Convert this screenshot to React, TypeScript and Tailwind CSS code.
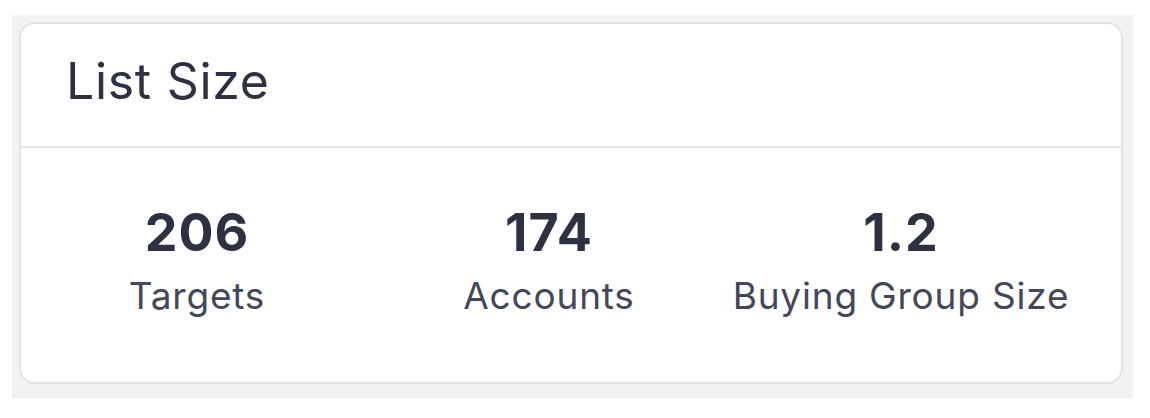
export default function App() {
  const stats = [
    { value: "206", label: "Targets" },
    { value: "174", label: "Accounts" },
    { value: "1.2", label: "Buying Group Size" },
  ];
  return (
    <div className="w-[1150px] h-[418px] bg-white pl-[12px] pt-[15px]" style={{ fontFamily: "Inter, 'Noto Sans', sans-serif" }}>
      <div className="w-[1121px] h-[383px] bg-[#f2f2f4] pl-[7px] pt-[7px]">
        <div className="w-[1104px] h-[362px] bg-white border-2 border-[#e4e4e8] rounded-[16px] flex flex-col">
          <div className="h-[124px] flex items-start pt-[32px] pl-[45px] border-b-2 border-[#e4e4e8]">
            <span className="text-[50px] leading-none tracking-[0.7px] text-[#2e3142] font-normal">List Size</span>
          </div>
          <div className="flex-1 grid grid-cols-[352px_352px_352px] pt-[59px]">
            {stats.map((s) => (
              <div key={s.label} className="flex flex-col items-center">
                <span className="text-[52px] leading-none tracking-[1px] font-bold text-[#2e3142]">{s.value}</span>
                <span className="mt-[18px] text-[37px] leading-none tracking-[0.8px] text-[#44475a]">{s.label}</span>
              </div>
            ))}
          </div>
        </div>
      </div>
    </div>
  );
}
